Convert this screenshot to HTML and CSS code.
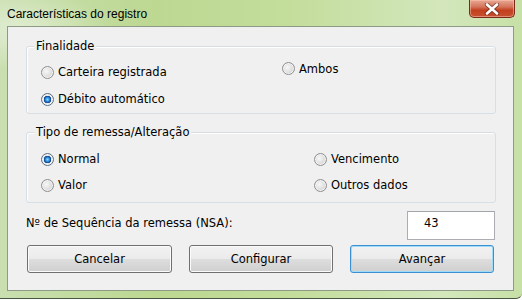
FILE: index.html
```html
<html>
  <head>
    <title>Características do registro</title>
    <link rel="stylesheet" href="styles.css">
  </head>
  <body>
    <div id="window">
      <div id="titleBar">
        <span id="titleText">Características do registro</span>
        <button id="closeButton">
          <svg width="16" height="12" viewBox="0 0 16 12">
            <path d="M3 1.5 L13 10.5 M13 1.5 L3 10.5" stroke="#4a1a10" stroke-width="4.4" stroke-linecap="round" fill="none" opacity="0.55"/>
            <path d="M3 1.5 L13 10.5 M13 1.5 L3 10.5" stroke="#ffffff" stroke-width="2.6" stroke-linecap="round" fill="none"/>
          </svg>
        </button>
      </div>
      <div id="client">
        <div class="group groupFinalidade">
          <span class="legend">Finalidade</span>
          <label class="radio"><input type="radio" name="finalidade"> Carteira registrada</label>
          <label class="radio raised"><input type="radio" name="finalidade"> Ambos</label>
          <label class="radio"><input type="radio" name="finalidade" checked> Débito automático</label>
        </div>

        <div class="group groupTipo">
          <span class="legend">Tipo de remessa/Alteração</span>
          <label class="radio"><input type="radio" name="tipo" checked> Normal</label>
          <label class="radio"><input type="radio" name="tipo"> Vencimento</label>
          <label class="radio"><input type="radio" name="tipo"> Valor</label>
          <label class="radio"><input type="radio" name="tipo"> Outros dados</label>
        </div>

        <div id="nsaRow">
          <span id="nsaLabel">Nº de Sequência da remessa (NSA):</span>
          <input id="nsaInput" type="text" value="43">
        </div>

        <div id="buttonRow">
          <button class="dialogButton">Cancelar</button>
          <button class="dialogButton">Configurar</button>
          <button class="dialogButton default">Avançar</button>
        </div>
      </div>
    </div>
  </body>
</html>
```

FILE: styles.css
```css
body {
  margin: 0;
  background: #ffffff;
}

#window {
  width: 522px;
  height: 299px;
  box-sizing: border-box;
  padding: 0 8px 0 7px;
  border-bottom: 1px solid #4a5644;
  border-bottom-right-radius: 6px;
  background:
    radial-gradient(ellipse 90px 40px at 20px 30px, rgba(255, 255, 255, 0.45), rgba(255, 255, 255, 0)),
    linear-gradient(90deg, #c9dfb0 0%, #bcd891 30%, #c3dd9b 55%, #d3e7bc 85%, #c7e0a6 100%);
  font-family: "DejaVu Sans", sans-serif;
  font-size: 11.5px;
  color: #000000;
}

#titleBar {
  height: 26px;
  display: flex;
  justify-content: space-between;
  align-items: flex-start;
}

#titleText {
  margin-top: 6px;
  font-family: "Liberation Sans", sans-serif;
  font-size: 12px;
  line-height: 16px;
  color: #000000;
}

#closeButton {
  width: 46px;
  height: 18px;
  margin-right: -1px;
  padding: 0;
  display: flex;
  align-items: center;
  justify-content: center;
  border: 1px solid #7a2a1c;
  border-top: none;
  border-radius: 0 0 5px 5px;
  background: linear-gradient(#e8a894 0%, #d4755c 40%, #c2401f 60%, #c8502f 100%);
  box-shadow: inset 0 0 0 1px rgba(255, 200, 180, 0.5);
}

#client {
  height: 265px;
  box-sizing: border-box;
  border: 1px solid #8c9a86;
  background: #f0f0f0;
  padding: 19px 17px 0 18px;
}

.group {
  position: relative;
  border: 1px solid #d5dfe5;
  border-radius: 3px;
  box-shadow: inset 1px 1px 0 #ffffff;
  display: grid;
  align-items: center;
}

.groupFinalidade {
  grid-template-columns: 241px 1fr;
  grid-auto-rows: 16px;
  row-gap: 11px;
  padding: 17px 0 6px 14px;
}

.groupTipo {
  margin-top: 18px;
  grid-template-columns: 273px 1fr;
  grid-auto-rows: 16px;
  row-gap: 10px;
  padding: 18px 0 9px 14px;
}

.legend {
  position: absolute;
  left: 7px;
  top: -8px;
  padding: 0 2px;
  line-height: 14px;
  background: #f0f0f0;
}

.radio {
  display: flex;
  align-items: center;
  gap: 4px;
  line-height: 16px;
  white-space: nowrap;
}

.raised {
  margin-top: -7px;
}

.radio input {
  appearance: none;
  margin: 0;
  width: 13px;
  height: 13px;
  border: 1px solid #8e8f8f;
  border-radius: 50%;
  background: radial-gradient(circle at 40% 40%, #f8f8f8 0%, #e2e2e2 45%, #c6c6c6 100%);
  box-shadow: inset 0 0 0 1px #f4f4f4;
}

.radio input:checked {
  border-color: #5d6f80;
  background: radial-gradient(circle at 50% 50%, #8fdcff 0px, #2b8ce0 2px, #0b3f85 3.5px, #e9e9e9 4px, #dcdcdc 5px, #c8c8c8 100%);
}

#nsaRow {
  margin-top: 8px;
  display: flex;
  justify-content: space-between;
  align-items: flex-start;
  padding-right: 1px;
}

#nsaLabel {
  margin-top: 4px;
  line-height: 16px;
}

#nsaInput {
  width: 88px;
  height: 29px;
  box-sizing: border-box;
  margin: 0;
  padding: 0 0 5px 16px;
  border: 1px solid #abadb3;
  border-top-color: #a0a4ab;
  background: #ffffff;
  font-family: "DejaVu Sans", sans-serif;
  font-size: 11.5px;
  color: #000000;
  outline: none;
}

#buttonRow {
  margin-top: 5px;
  padding-left: 1px;
  display: grid;
  grid-template-columns: 145px 144px 144px;
  column-gap: 17px;
}

.dialogButton {
  height: 28px;
  border: 1px solid #707070;
  border-radius: 3px;
  background: linear-gradient(#f2f2f2 0%, #ebebeb 48%, #dddddd 52%, #cfcfcf 100%);
  box-shadow: inset 0 0 0 1px #fbfbfb;
  font-family: "DejaVu Sans", sans-serif;
  font-size: 11.5px;
  color: #000000;
  padding: 0;
}

.dialogButton.default {
  border-color: #3c8fd0;
  box-shadow: inset 0 0 0 1px #9fdcfa;
}
```
